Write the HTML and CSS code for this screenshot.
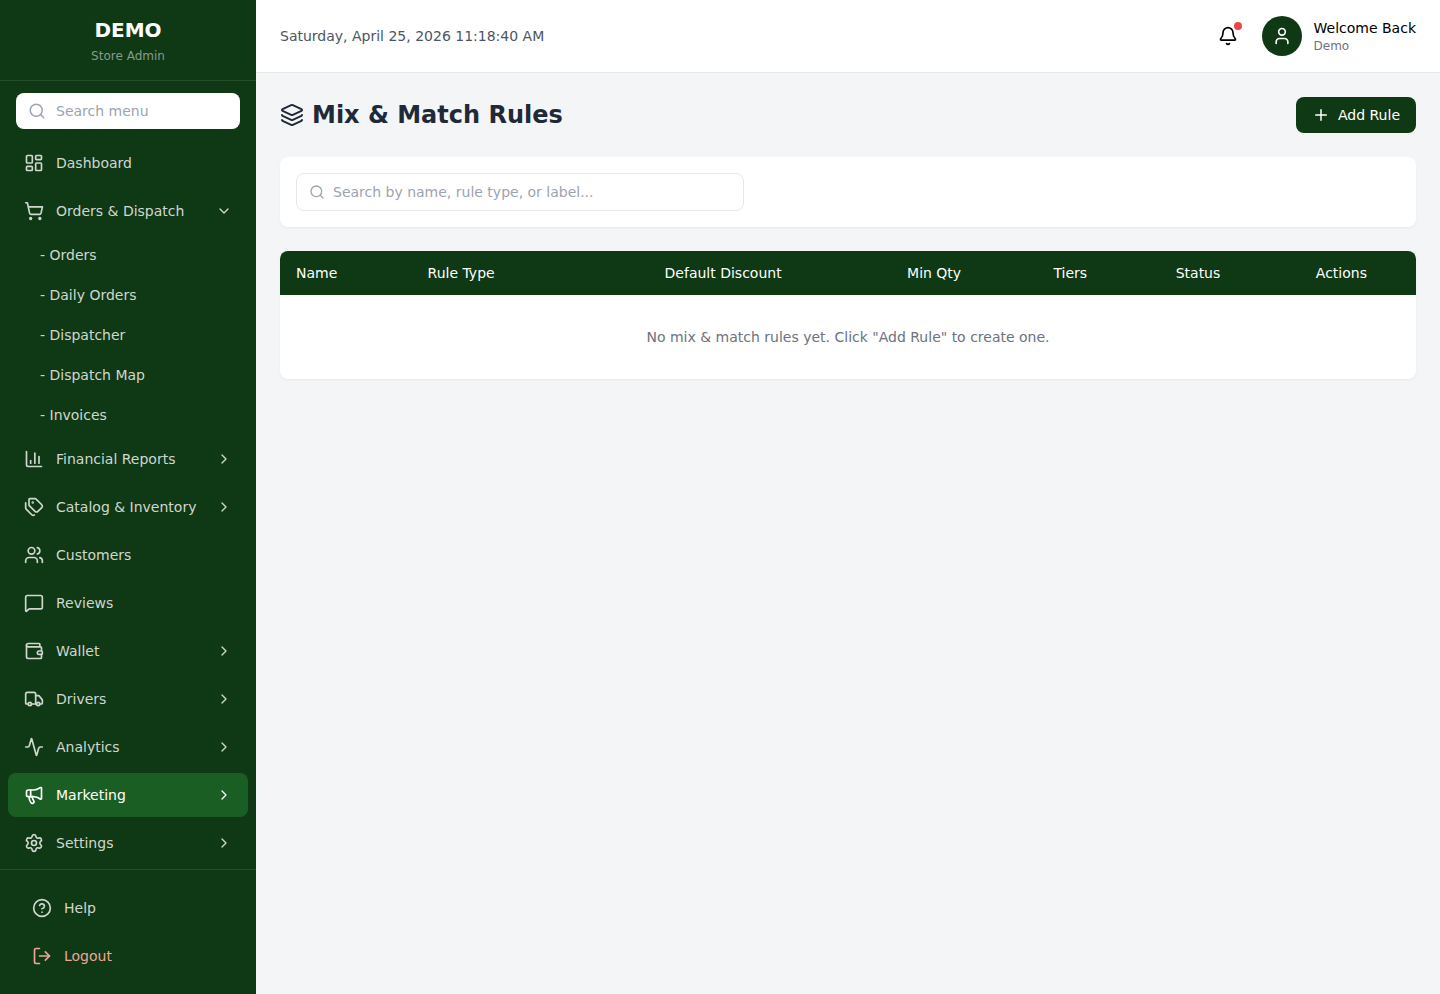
FILE: index.html
```
<!DOCTYPE html>
<html lang="en">
<head>
    <meta charset="UTF-8">
    <meta name="viewport" content="width=device-width, initial-scale=1.0">
    <title>Mix &amp; Match Rules - Store Admin</title>
    <link rel="stylesheet" href="styles.css">
</head>
<body>
    <div class="layout">
        <!-- Sidebar -->
        <aside class="sidebar">
            <div class="brand">
                <div class="brand-name">DEMO</div>
                <p class="brand-role">Store Admin</p>
            </div>

            <div class="menu-search">
                <label for="menuSearch" aria-label="Search menu">
                    <svg class="icon icon-18" viewBox="0 0 24 24"><circle cx="11" cy="11" r="8"/><path d="m21 21-4.3-4.3"/></svg>
                </label>
                <input type="text" id="menuSearch" placeholder="Search menu">
            </div>

            <nav class="menu">
                <ul>
                    <li>
                        <a class="menu-item" href="#dashboard">
                            <svg class="icon" viewBox="0 0 24 24"><rect width="7" height="9" x="3" y="3" rx="1"/><rect width="7" height="5" x="14" y="3" rx="1"/><rect width="7" height="9" x="14" y="12" rx="1"/><rect width="7" height="5" x="3" y="16" rx="1"/></svg>
                            <span>Dashboard</span>
                        </a>
                    </li>
                    <li>
                        <button class="menu-item" type="button" aria-expanded="true">
                            <svg class="icon" viewBox="0 0 24 24"><circle cx="8" cy="21" r="1"/><circle cx="19" cy="21" r="1"/><path d="M2.05 2.05h2l2.66 12.42a2 2 0 0 0 2 1.58h9.78a2 2 0 0 0 1.95-1.57l1.65-7.43H5.12"/></svg>
                            <span>Orders &amp; Dispatch</span>
                            <svg class="icon icon-16" viewBox="0 0 24 24"><path d="m6 9 6 6 6-6"/></svg>
                        </button>
                        <ul class="submenu">
                            <li><a href="#orders">- Orders</a></li>
                            <li><a href="#daily-orders">- Daily Orders</a></li>
                            <li><a href="#dispatcher">- Dispatcher</a></li>
                            <li><a href="#dispatch-map">- Dispatch Map</a></li>
                            <li><a href="#invoices">- Invoices</a></li>
                        </ul>
                    </li>
                    <li>
                        <button class="menu-item" type="button" aria-expanded="false">
                            <svg class="icon" viewBox="0 0 24 24"><path d="M3 3v16a2 2 0 0 0 2 2h16"/><path d="M18 17V9"/><path d="M13 17V5"/><path d="M8 17v-3"/></svg>
                            <span>Financial Reports</span>
                            <svg class="icon icon-16" viewBox="0 0 24 24"><path d="m9 18 6-6-6-6"/></svg>
                        </button>
                    </li>
                    <li>
                        <button class="menu-item" type="button" aria-expanded="false">
                            <svg class="icon" viewBox="0 0 24 24"><path d="M13.172 2a2 2 0 0 1 1.414.586l6.71 6.71a2.4 2.4 0 0 1 0 3.408l-4.592 4.592a2.4 2.4 0 0 1-3.408 0l-6.71-6.71A2 2 0 0 1 6 9.172V3a1 1 0 0 1 1-1z"/><path d="M2 7v6.172a2 2 0 0 0 .586 1.414l6.71 6.71a2.4 2.4 0 0 0 3.191.193"/><circle cx="10.5" cy="6.5" r=".5" fill="currentColor"/></svg>
                            <span>Catalog &amp; Inventory</span>
                            <svg class="icon icon-16" viewBox="0 0 24 24"><path d="m9 18 6-6-6-6"/></svg>
                        </button>
                    </li>
                    <li>
                        <a class="menu-item" href="#customers">
                            <svg class="icon" viewBox="0 0 24 24"><path d="M16 21v-2a4 4 0 0 0-4-4H6a4 4 0 0 0-4 4v2"/><circle cx="9" cy="7" r="4"/><path d="M22 21v-2a4 4 0 0 0-3-3.87"/><path d="M16 3.13a4 4 0 0 1 0 7.75"/></svg>
                            <span>Customers</span>
                        </a>
                    </li>
                    <li>
                        <a class="menu-item" href="#reviews">
                            <svg class="icon" viewBox="0 0 24 24"><path d="M22 17a2 2 0 0 1-2 2H6.828a2 2 0 0 0-1.414.586l-2.202 2.202A.71.71 0 0 1 2 21.286V5a2 2 0 0 1 2-2h16a2 2 0 0 1 2 2z"/></svg>
                            <span>Reviews</span>
                        </a>
                    </li>
                    <li>
                        <button class="menu-item" type="button" aria-expanded="false">
                            <svg class="icon" viewBox="0 0 24 24"><path d="M19 7V4a1 1 0 0 0-1-1H5a2 2 0 0 0 0 4h15a1 1 0 0 1 1 1v4h-3a2 2 0 0 0 0 4h3a1 1 0 0 0 1-1v-2a1 1 0 0 0-1-1"/><path d="M3 5v14a2 2 0 0 0 2 2h15a1 1 0 0 0 1-1v-4"/></svg>
                            <span>Wallet</span>
                            <svg class="icon icon-16" viewBox="0 0 24 24"><path d="m9 18 6-6-6-6"/></svg>
                        </button>
                    </li>
                    <li>
                        <button class="menu-item" type="button" aria-expanded="false">
                            <svg class="icon" viewBox="0 0 24 24"><path d="M14 18V6a2 2 0 0 0-2-2H4a2 2 0 0 0-2 2v11a1 1 0 0 0 1 1h2"/><path d="M15 18H9"/><path d="M19 18h2a1 1 0 0 0 1-1v-3.65a1 1 0 0 0-.22-.624l-3.48-4.35A1 1 0 0 0 17.52 8H14"/><circle cx="17" cy="18" r="2"/><circle cx="7" cy="18" r="2"/></svg>
                            <span>Drivers</span>
                            <svg class="icon icon-16" viewBox="0 0 24 24"><path d="m9 18 6-6-6-6"/></svg>
                        </button>
                    </li>
                    <li>
                        <button class="menu-item" type="button" aria-expanded="false">
                            <svg class="icon" viewBox="0 0 24 24"><path d="M22 12h-2.48a2 2 0 0 0-1.93 1.46l-2.35 8.36a.25.25 0 0 1-.48 0L9.24 2.18a.25.25 0 0 0-.48 0l-2.35 8.36A2 2 0 0 1 4.49 12H2"/></svg>
                            <span>Analytics</span>
                            <svg class="icon icon-16" viewBox="0 0 24 24"><path d="m9 18 6-6-6-6"/></svg>
                        </button>
                    </li>
                    <li>
                        <button class="menu-item active" type="button" aria-expanded="false">
                            <svg class="icon" viewBox="0 0 24 24"><path d="M11 6a13 13 0 0 0 8.4-2.8A1 1 0 0 1 21 4v12a1 1 0 0 1-1.6.8A13 13 0 0 0 11 14H5a2 2 0 0 1-2-2V8a2 2 0 0 1 2-2z"/><path d="M6 14a12 12 0 0 0 2.4 7.2 2 2 0 0 0 3.2-2.4A8 8 0 0 1 10 14"/><path d="M8 6v8"/></svg>
                            <span>Marketing</span>
                            <svg class="icon icon-16" viewBox="0 0 24 24"><path d="m9 18 6-6-6-6"/></svg>
                        </button>
                    </li>
                    <li>
                        <button class="menu-item" type="button" aria-expanded="false">
                            <svg class="icon" viewBox="0 0 24 24"><path d="M9.671 4.136a2.34 2.34 0 0 1 4.659 0 2.34 2.34 0 0 0 3.319 1.915 2.34 2.34 0 0 1 2.33 4.033 2.34 2.34 0 0 0 0 3.831 2.34 2.34 0 0 1-2.33 4.033 2.34 2.34 0 0 0-3.319 1.915 2.34 2.34 0 0 1-4.659 0 2.34 2.34 0 0 0-3.32-1.915 2.34 2.34 0 0 1-2.33-4.033 2.34 2.34 0 0 0 0-3.831A2.34 2.34 0 0 1 6.35 6.051a2.34 2.34 0 0 0 3.319-1.915"/><circle cx="12" cy="12" r="3"/></svg>
                            <span>Settings</span>
                            <svg class="icon icon-16" viewBox="0 0 24 24"><path d="m9 18 6-6-6-6"/></svg>
                        </button>
                    </li>
                </ul>
            </nav>

            <div class="sidebar-footer">
                <a class="menu-item" href="#help">
                    <svg class="icon" viewBox="0 0 24 24"><circle cx="12" cy="12" r="10"/><path d="M9.09 9a3 3 0 0 1 5.83 1c0 2-3 3-3 3"/><path d="M12 17h.01"/></svg>
                    <span>Help</span>
                </a>
                <button class="menu-item logout" type="button">
                    <svg class="icon" viewBox="0 0 24 24"><path d="m16 17 5-5-5-5"/><path d="M21 12H9"/><path d="M9 21H5a2 2 0 0 1-2-2V5a2 2 0 0 1 2-2h4"/></svg>
                    <span>Logout</span>
                </button>
            </div>
        </aside>

        <div class="page">
            <!-- Top bar -->
            <header class="topbar">
                <time datetime="2026-04-25T11:18:40">Saturday, April 25, 2026 11:18:40 AM</time>
                <div class="topbar-right">
                    <button class="bell" type="button" aria-label="Notifications">
                        <svg class="icon" viewBox="0 0 24 24"><path d="M10.268 21a2 2 0 0 0 3.464 0"/><path d="M3.262 15.326A1 1 0 0 0 4 17h16a1 1 0 0 0 .74-1.673C19.41 13.956 18 12.499 18 8A6 6 0 0 0 6 8c0 4.499-1.411 5.956-2.738 7.326"/></svg>
                        <span class="bell-dot"></span>
                    </button>
                    <div class="user">
                        <div class="avatar">
                            <svg class="icon" viewBox="0 0 24 24"><path d="M19 21v-2a4 4 0 0 0-4-4H9a4 4 0 0 0-4 4v2"/><circle cx="12" cy="7" r="4"/></svg>
                        </div>
                        <div>
                            <p class="user-greeting">Welcome Back</p>
                            <p class="user-name">Demo</p>
                        </div>
                    </div>
                </div>
            </header>

            <main class="content">
                <div class="page-header">
                    <h1>
                        <svg class="icon icon-24" viewBox="0 0 24 24"><path d="M12.83 2.18a2 2 0 0 0-1.66 0L2.6 6.08a1 1 0 0 0 0 1.83l8.58 3.91a2 2 0 0 0 1.66 0l8.58-3.9a1 1 0 0 0 0-1.83z"/><path d="M2 12a1 1 0 0 0 .58.91l8.6 3.91a2 2 0 0 0 1.65 0l8.58-3.9A1 1 0 0 0 22 12"/><path d="M2 17a1 1 0 0 0 .58.91l8.6 3.91a2 2 0 0 0 1.65 0l8.58-3.9A1 1 0 0 0 22 17"/></svg>
                        Mix &amp; Match Rules
                    </h1>
                    <button class="add-btn" type="button">
                        <svg class="icon icon-18" viewBox="0 0 24 24"><path d="M5 12h14"/><path d="M12 5v14"/></svg>
                        Add Rule
                    </button>
                </div>

                <div class="card filter-card">
                    <div class="rule-search">
                        <label for="ruleSearch" aria-label="Search rules">
                            <svg class="icon icon-16" viewBox="0 0 24 24"><circle cx="11" cy="11" r="8"/><path d="m21 21-4.3-4.3"/></svg>
                        </label>
                        <input type="text" id="ruleSearch" placeholder="Search by name, rule type, or label...">
                    </div>
                </div>

                <div class="card table-card">
                    <table>
                        <thead>
                            <tr>
                                <th class="left">Name</th>
                                <th class="left">Rule Type</th>
                                <th>Default Discount</th>
                                <th>Min Qty</th>
                                <th>Tiers</th>
                                <th>Status</th>
                                <th>Actions</th>
                            </tr>
                        </thead>
                        <tbody>
                            <tr>
                                <td class="empty" colspan="7">No mix &amp; match rules yet. Click "Add Rule" to create one.</td>
                            </tr>
                        </tbody>
                    </table>
                </div>
            </main>
        </div>
    </div>
</body>
</html>
```
FILE: styles.css
```
* {
    box-sizing: border-box;
    margin: 0;
    padding: 0;
}
body {
    font-family: "DejaVu Sans", sans-serif;
    font-size: 14px;
    line-height: 20px;
    color: #000;
    background-color: #f3f5f7;
}
button, input {
    font: inherit;
    color: inherit;
    border: none;
    background: none;
}
button {
    cursor: pointer;
}
a {
    color: inherit;
    text-decoration: none;
}
ul {
    list-style: none;
}
input::placeholder {
    color: #9ca3af;
    opacity: 1;
}
.icon {
    display: block;
    flex-shrink: 0;
    width: 20px;
    height: 20px;
    fill: none;
    stroke: currentColor;
    stroke-width: 2;
    stroke-linecap: round;
    stroke-linejoin: round;
}
.icon-16 {
    width: 16px;
    height: 16px;
}
.icon-18 {
    width: 18px;
    height: 18px;
}
.icon-24 {
    width: 24px;
    height: 24px;
}
.layout {
    display: flex;
    height: 100vh;
}

/* Sidebar */
.sidebar {
    display: flex;
    flex-direction: column;
    flex-shrink: 0;
    width: 256px;
    color: #cfd7d0;
    background-color: #0f3814;
}
.brand {
    padding: 16px;
    text-align: center;
    border-bottom: 1px solid #274c2c;
}
.brand-name {
    font-size: 20px;
    line-height: 28px;
    font-weight: bold;
    color: #fff;
}
.brand-role {
    margin-top: 4px;
    font-size: 12px;
    line-height: 16px;
    color: #879b89;
}
.menu-search {
    display: flex;
    align-items: center;
    gap: 10px;
    margin: 12px 16px;
    padding: 0 12px;
    border-radius: 8px;
    color: #9ca3af;
    background-color: #fff;
}
.menu-search input {
    flex: 1;
    min-width: 0;
    padding: 8px 0;
    color: #1f2937;
    outline: none;
}
.menu {
    flex: 1;
    min-height: 0;
    padding: 0 8px;
    overflow-y: auto;
    scrollbar-width: none;
}
.menu li {
    margin-bottom: 4px;
}
.menu-item {
    display: flex;
    align-items: center;
    gap: 12px;
    width: 100%;
    padding: 12px 16px;
    border-radius: 8px;
    text-align: left;
}
.menu-item span {
    flex: 1;
}
.menu-item.active {
    color: #fff;
    background-color: #1b5e24;
}
.submenu {
    margin-top: 4px;
}
.submenu a {
    display: block;
    padding: 8px 32px;
}
.sidebar-footer {
    display: flex;
    flex-direction: column;
    gap: 4px;
    padding: 16px;
    border-top: 1px solid #274c2c;
}
.menu-item.logout {
    color: #eea798;
}

/* Top bar */
.page {
    flex: 1;
    min-width: 0;
    display: flex;
    flex-direction: column;
}
.topbar {
    display: flex;
    align-items: center;
    justify-content: space-between;
    padding: 16px 24px;
    color: #4b5563;
    background-color: #fff;
    border-bottom: 1px solid #e5e7eb;
}
.topbar-right {
    display: flex;
    align-items: center;
    gap: 16px;
}
.bell {
    position: relative;
    padding: 8px;
    color: #000;
}
.bell-dot {
    position: absolute;
    top: 4px;
    right: 4px;
    width: 8px;
    height: 8px;
    border-radius: 50%;
    background-color: #ef4444;
}
.user {
    display: flex;
    align-items: center;
    gap: 12px;
}
.avatar {
    display: flex;
    align-items: center;
    justify-content: center;
    width: 40px;
    height: 40px;
    border-radius: 50%;
    color: #fff;
    background-color: #0f3814;
}
.user-greeting {
    color: #000;
}
.user-name {
    font-size: 12px;
    line-height: 16px;
    color: #6b7280;
}

/* Content */
.content {
    flex: 1;
    display: flex;
    flex-direction: column;
    gap: 24px;
    padding: 24px;
    overflow-y: auto;
}
.page-header {
    display: flex;
    align-items: center;
    justify-content: space-between;
}
.page-header h1 {
    display: flex;
    align-items: center;
    gap: 8px;
    font-size: 24px;
    line-height: 32px;
    color: #1f2937;
}
.add-btn {
    display: flex;
    align-items: center;
    gap: 8px;
    padding: 8px 16px;
    border-radius: 8px;
    color: #fff;
    background-color: #0f3814;
}
.card {
    background-color: #fff;
    border-radius: 8px;
    box-shadow: 0 1px 2px rgba(0, 0, 0, 0.05);
}
.filter-card {
    padding: 16px;
}
.rule-search {
    display: flex;
    align-items: center;
    gap: 8px;
    max-width: 448px;
    padding: 0 12px;
    border: 1px solid #e5e7eb;
    border-radius: 8px;
    color: #9ca3af;
}
.rule-search input {
    flex: 1;
    min-width: 0;
    padding: 8px 0;
    color: #1f2937;
    outline: none;
}
.table-card {
    overflow: hidden;
    flex-shrink: 0;
}
table {
    width: 100%;
    border-collapse: collapse;
}
thead {
    color: #fff;
    background-color: #0f3814;
}
th {
    padding: 12px 16px;
    font-weight: normal;
    text-align: center;
}
th.left {
    text-align: left;
}
.empty {
    padding: 32px 16px;
    text-align: center;
    color: #6b7280;
}
```
